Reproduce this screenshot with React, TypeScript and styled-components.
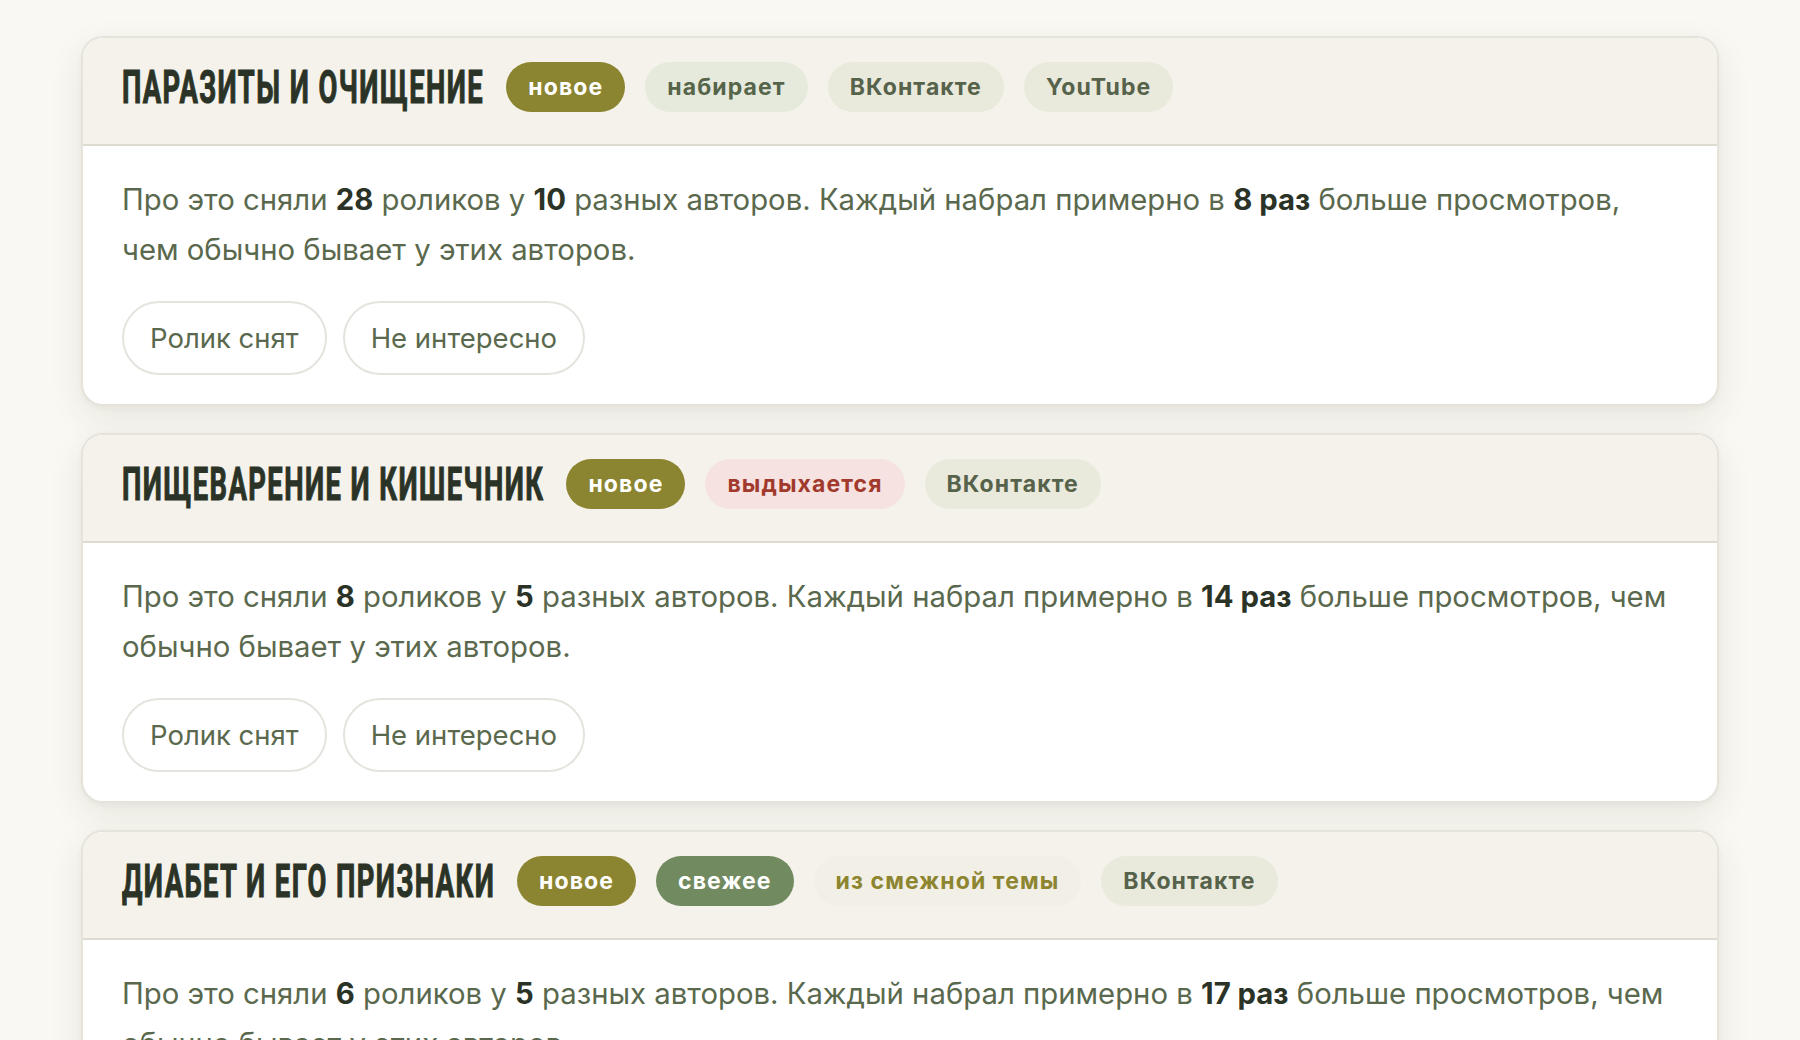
import React, { useLayoutEffect, useRef, useState } from "react";
import styled, { createGlobalStyle } from "styled-components";

const GlobalStyle = createGlobalStyle`
  html, body { margin: 0; padding: 0; background: #f9f8f2; }
  body { font-family: "Inter", "Noto Sans", sans-serif; -webkit-font-smoothing: antialiased; }
  * { box-sizing: border-box; }
`;

const Page = styled.main`
  display: flex;
  flex-direction: column;
  gap: 27px;
  padding: 36px 81px 40px;
  min-height: 1040px;
  background: #f9f8f2;
`;

const Card = styled.section`
  background: #ffffff;
  border: 2px solid #e5e3da;
  border-radius: 22px;
  overflow: hidden;
  box-shadow: 0 12px 34px rgba(60, 58, 30, 0.09), 0 2px 6px rgba(60, 58, 30, 0.04);
`;

const Header = styled.header`
  display: flex;
  align-items: center;
  gap: 20px;
  padding: 21px 39px 29px;
  background: #f4f2ea;
  border-bottom: 2px solid #dedbd0;
`;

const TitleBox = styled.h2`
  margin: 0 2px 0 0;
  flex: none;
  height: 56px;
  overflow: visible;
  white-space: nowrap;
`;

const TitleText = styled.span`
  display: inline-block;
  font-family: "Roboto", "Liberation Sans", sans-serif;
  font-weight: 700;
  font-size: 46px;
  line-height: 56px;
  color: #2b3327;
  letter-spacing: 2.4px;
  -webkit-text-stroke: 1.1px #2b3327;
  transform: scaleX(0.595);
  transform-origin: left center;
`;

type Tone = "olive" | "green" | "soft" | "neutral" | "red" | "plain";

const toneMap: Record<Tone, { bg: string; fg: string }> = {
  olive: { bg: "#8b8430", fg: "#ffffff" },
  green: { bg: "#728a5f", fg: "#ffffff" },
  soft: { bg: "#e5eadc", fg: "#56654a" },
  neutral: { bg: "#e9e9dc", fg: "#56624a" },
  red: { bg: "#f6e2e0", fg: "#a13a2d" },
  plain: { bg: "#f1efe6", fg: "#8d852f" },
};

const Tag = styled.span<{ $tone: Tone }>`
  flex: none;
  display: inline-flex;
  align-items: center;
  height: 50px;
  padding: 0 22px;
  border-radius: 999px;
  font-family: "Inter", "Noto Sans", sans-serif;
  font-weight: 700;
  font-size: 23px;
  letter-spacing: 1.1px;
  background: ${(p) => toneMap[p.$tone].bg};
  color: ${(p) => toneMap[p.$tone].fg};
`;

const Body = styled.div`
  padding: 29px 39px 29px;
`;

const Text = styled.p`
  margin: 0;
  font-family: "Inter", "Noto Sans", sans-serif;
  font-size: 29.3px;
  line-height: 49.5px;
  color: #5a694d;

  b {
    font-weight: 700;
    color: #2b3327;
  }
`;

const Actions = styled.div`
  display: flex;
  gap: 16px;
  margin-top: 27px;
`;

const ActionButton = styled.button`
  height: 74px;
  padding: 0 26px;
  border: 2px solid #e4e4de;
  border-radius: 999px;
  background: #ffffff;
  font-family: "Inter", "Noto Sans", sans-serif;
  font-size: 27.5px;
  color: #5a694d;
  cursor: pointer;
`;

const SCALE = 0.595;

function Title({ children }: { children: string }) {
  const ref = useRef<HTMLSpanElement>(null);
  const [w, setW] = useState<number | undefined>(undefined);
  useLayoutEffect(() => {
    const measure = () => {
      if (ref.current) setW(ref.current.offsetWidth * SCALE);
    };
    measure();
    if ((document as any).fonts?.ready) (document as any).fonts.ready.then(measure);
  }, [children]);
  return (
    <TitleBox style={{ width: w }}>
      <TitleText ref={ref}>{children}</TitleText>
    </TitleBox>
  );
}

type Item = {
  title: string;
  tags: { label: string; tone: Tone }[];
  videos: number;
  authors: number;
  times: number;
};

const items: Item[] = [
  {
    title: "ПАРАЗИТЫ И ОЧИЩЕНИЕ",
    tags: [
      { label: "новое", tone: "olive" },
      { label: "набирает", tone: "soft" },
      { label: "ВКонтакте", tone: "neutral" },
      { label: "YouTube", tone: "neutral" },
    ],
    videos: 28,
    authors: 10,
    times: 8,
  },
  {
    title: "ПИЩЕВАРЕНИЕ И КИШЕЧНИК",
    tags: [
      { label: "новое", tone: "olive" },
      { label: "выдыхается", tone: "red" },
      { label: "ВКонтакте", tone: "neutral" },
    ],
    videos: 8,
    authors: 5,
    times: 14,
  },
  {
    title: "ДИАБЕТ И ЕГО ПРИЗНАКИ",
    tags: [
      { label: "новое", tone: "olive" },
      { label: "свежее", tone: "green" },
      { label: "из смежной темы", tone: "plain" },
      { label: "ВКонтакте", tone: "neutral" },
    ],
    videos: 6,
    authors: 5,
    times: 17,
  },
];

export default function App() {
  return (
    <>
      <GlobalStyle />
      <Page>
        {items.map((it) => (
          <Card key={it.title}>
            <Header>
              <Title>{it.title}</Title>
              {it.tags.map((t) => (
                <Tag key={t.label} $tone={t.tone}>
                  {t.label}
                </Tag>
              ))}
            </Header>
            <Body>
              <Text>
                Про это сняли <b>{it.videos}</b> роликов у <b>{it.authors}</b> разных авторов. Каждый набрал
                примерно в <b>{it.times} раз</b> больше просмотров, чем обычно бывает у этих авторов.
              </Text>
              <Actions>
                <ActionButton>Ролик снят</ActionButton>
                <ActionButton>Не интересно</ActionButton>
              </Actions>
            </Body>
          </Card>
        ))}
      </Page>
    </>
  );
}
